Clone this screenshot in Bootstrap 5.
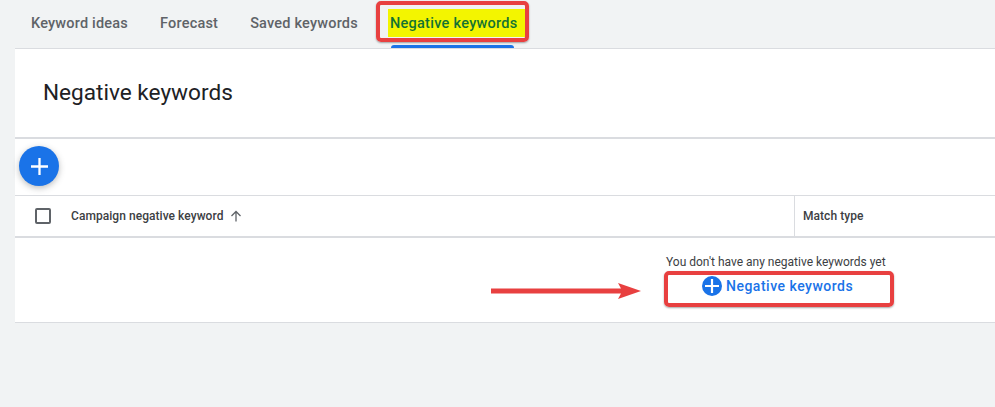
<!DOCTYPE html>
<html lang="en">
<head>
  <meta charset="UTF-8" />
  <meta name="viewport" content="width=device-width, initial-scale=1" />
  <title>Negative keywords</title>
  <link href="https://cdn.jsdelivr.net/npm/bootstrap@5.3.3/dist/css/bootstrap.min.css" rel="stylesheet" />
  <style>
    body {
      font-family: Roboto, "Liberation Sans", sans-serif;
      background: #f1f3f4;
      color: #202124;
      height: 407px;
      overflow: hidden;
      position: relative;
    }

    .tabbar {
      height: 48px;
      padding-left: 15px;
    }

    .tabitem {
      position: relative;
      padding: 0 16px;
      line-height: 48px;
      font-size: 14.5px;
      font-weight: 500;
      letter-spacing: .2px;
      color: #5f6368;
    }

    .tabitem.on {
      padding: 0;
      margin-left: 16px;
      letter-spacing: .28px;
      color: #137333;
    }

    .tabitem.on span {
      background: #f3f500;
      padding: 6px 7px 5px 2px;
      margin-left: -2px;
    }

    .tabitem.on::after {
      content: "";
      position: absolute;
      left: 1px;
      width: 123px;
      bottom: 0;
      height: 3px;
      background: #1a73e8;
      border-radius: 3px 3px 0 0;
    }

    .panel {
      margin-left: 15px;
      height: 275px;
      background: #fff;
      border-top: 1px solid #dadce0;
      border-bottom: 1px solid #dadce0;
    }

    .panel-title {
      height: 90px;
      padding-left: 28px;
      border-bottom: 2px solid #dadce0;
      font-size: 22.6px;
      font-weight: 400;
      margin: 0;
    }

    .fabrow {
      height: 57px;
      padding-left: 4px;
      padding-top: 7px;
      border-bottom: 1px solid #dadce0;
    }

    .fab {
      width: 40px;
      height: 40px;
      background: #1a73e8;
      box-shadow: 0 2px 6px rgba(60, 64, 67, .35);
    }

    .headrow {
      height: 42px;
      border-bottom: 2px solid #dadce0;
      font-size: 12px;
      font-weight: 500;
      letter-spacing: .05px;
      color: #3c4043;
    }

    .headcell-a {
      width: 780px;
      padding-left: 20px;
      border-right: 1px solid #dadce0;
    }

    .headcell-b {
      padding-left: 8px;
    }

    .headcell-a svg {
      margin-left: 7px;
    }

    .tick {
      width: 16px;
      height: 16px;
      border: 2px solid #5f6368;
      border-radius: 2px;
      margin-right: 20px;
    }

    .empty-box {
      padding-left: 651px;
      padding-top: 16px;
    }

    .empty-msg {
      font-size: 12px;
      line-height: 17px;
      color: #3c4043;
      white-space: nowrap;
    }

    .addlink {
      font-size: 14px;
      font-weight: 500;
      letter-spacing: .5px;
      color: #1a73e8;
      text-decoration: none;
      height: 20px;
      padding-left: 36px;
      margin-top: 5px;
      gap: 4px;
    }

    .markbox {
      position: absolute;
      border: 4px solid #e84040;
      border-radius: 5px;
      box-shadow: 0 1px 2px rgba(0, 0, 0, .35);
      pointer-events: none;
    }

    .mark-tab {
      left: 376px;
      top: 1px;
      width: 153px;
      height: 41px;
    }

    .mark-add {
      left: 664px;
      top: 271px;
      width: 230px;
      height: 36px;
    }

    .mark-arrow {
      position: absolute;
      left: 490px;
      top: 282px;
    }
  </style>
</head>
<body>

  <!-- Tabs -->
  <div class="tabbar d-flex align-items-stretch">
    <div class="tabitem">Keyword ideas</div>
    <div class="tabitem">Forecast</div>
    <div class="tabitem">Saved keywords</div>
    <div class="tabitem on"><span>Negative keywords</span></div>
  </div>

  <!-- Panel -->
  <div class="panel">
    <h1 class="panel-title d-flex align-items-center">Negative keywords</h1>

    <div class="fabrow">
      <div class="fab rounded-circle d-flex align-items-center justify-content-center">
        <svg width="17" height="17" viewBox="0 0 17 17"><path d="M8.500 0v17M0 8.500h17" stroke="#fff" stroke-width="2.300" fill="none"/></svg>
      </div>
    </div>

    <div class="headrow d-flex">
      <div class="headcell-a d-flex align-items-center">
        <div class="tick"></div>
        <span>Campaign negative keyword</span>
        <svg width="12" height="12" viewBox="0 0 12 12"><path d="M6 11.500V1.500M1.500 6L6 1.500 10.500 6" stroke="#5f6368" stroke-width="1.300" fill="none"/></svg>
      </div>
      <div class="headcell-b d-flex align-items-center">Match type</div>
    </div>

    <div class="empty-box">
      <div class="empty-msg">You don't have any negative keywords yet</div>
      <a class="addlink d-flex align-items-center" href="#">
        <svg width="20" height="20" viewBox="0 0 20 20"><circle cx="10" cy="10" r="10" fill="#1a73e8"/><path d="M10 3v14M3 10h14" stroke="#fff" stroke-width="2.200" fill="none"/></svg>
        <span>Negative keywords</span>
      </a>
    </div>
  </div>

  <!-- Red annotations -->
  <div class="markbox mark-tab"></div>
  <div class="markbox mark-add"></div>
  <svg class="mark-arrow" width="152" height="18" viewBox="0 0 152 18"><path d="M1 6.500H131L128 1l23 8-23 8 3-5.500H1z" fill="#e84040"/></svg>

  <script src="https://cdn.jsdelivr.net/npm/bootstrap@5.3.3/dist/js/bootstrap.bundle.min.js"></script>
</body>
</html>
